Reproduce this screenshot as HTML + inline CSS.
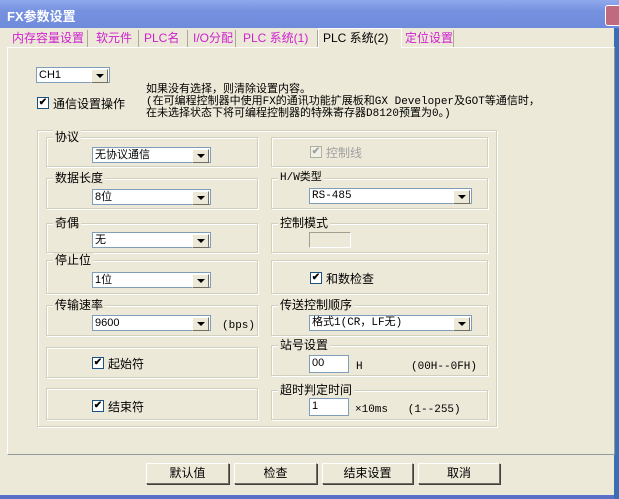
<!DOCTYPE html>
<html><head><meta charset="utf-8"><style>
*{margin:0;padding:0;box-sizing:border-box}
body{width:619px;height:499px;overflow:hidden;background:#ece9d8;position:relative;font-family:"Liberation Sans","WenQuanYi Zen Hei","Noto Sans CJK SC",sans-serif;font-size:12px;color:#000}
.a{position:absolute}
.title{left:0;top:0;width:619px;height:28px;background:linear-gradient(#8fa9ec,#7591df 40%,#6f8bdb);color:#fff;font-weight:bold;font-size:13px;padding:6px 0 0 7px}
.x{left:605px;top:5px;width:14px;height:21px;background:#c06a80;border:1px solid #fff;border-right:none;border-radius:3px 0 0 3px}
.tab{top:30px;height:17px;color:#d020d0;font-size:12px;line-height:16px;padding-left:3px;border-right:1px solid #aca899}
.page{left:7px;top:47px;width:608px;height:408px;border:1px solid #fff;border-right:1px solid #919b9c;border-bottom:1px solid #919b9c}
.grp{border:1px solid #d0d0bf;box-shadow:inset 1px 1px 0 #fff,1px 1px 0 #fff}
.lg{background:#ece9d8;padding:0 2px;top:-8px;left:6px;position:absolute;line-height:14px;white-space:nowrap}
.cb{background:#fff;border:1px solid #7f9db9;height:16px;line-height:14px;padding-left:2px;font-size:11px}
.cb:after{content:"";position:absolute;right:1px;top:1px;width:15px;height:12px;background:#ece9d8;border:1px solid;border-color:#fff #716f64 #716f64 #fff}
.cb i{position:absolute;right:5px;top:6px;border-left:4px solid transparent;border-right:4px solid transparent;border-top:4px solid #000;z-index:2;width:0;height:0}
.chk{width:12px;height:12px;border:1px solid #1c5180;background:#fff;font-size:10px;line-height:10px;text-align:center;font-weight:bold}
.ed{background:#fff;border:1px solid #7f9db9;font-size:11px;padding-left:2px;line-height:14px}
.btn{top:463px;height:21px;border:1px solid;border-color:#fff #716f64 #716f64 #fff;box-shadow:1px 1px 0 #404040;text-align:center;line-height:19px;font-size:12px}
.m{font-family:"Liberation Mono","WenQuanYi Zen Hei",monospace;font-size:11px}
</style></head><body>
<div class="a title">FX参数设置</div>
<div class="a x"></div>
<div class="a" style="left:614px;top:28px;width:5px;height:471px;background:#3a6fb5"></div>
<div class="a" style="left:0;top:495px;width:614px;height:4px;background:#5a6fc8"></div>
<div class="a tab" style="left:9px;width:79px">内存容量设置</div>
<div class="a tab" style="left:93px;width:46px">软元件</div>
<div class="a tab" style="left:141px;width:47px">PLC名</div>
<div class="a tab" style="left:190px;width:46px">I/O分配</div>
<div class="a tab" style="left:240px;width:78px">PLC 系统(1)</div>
<div class="a" style="left:318px;top:28px;width:84px;height:20px;background:#ece9d8;border:1px solid #fff;border-bottom:none;line-height:18px;padding-left:4px;z-index:3">PLC 系统(2)</div>
<div class="a tab" style="left:402px;width:52px">定位设置</div>
<div class="a page"></div>

<div class="a cb" style="left:36px;top:67px;width:74px">CH1<i></i></div>
<div class="a chk" style="left:37px;top:97px">✔</div>
<div class="a" style="left:53px;top:95px">通信设置操作</div>
<div class="a m" style="left:146px;top:84px;line-height:12px;font-size:11px">如果没有选择，则清除设置内容。<br>(在可编程控制器中使用FX的通讯功能扩展板和GX Developer及GOT等通信时，<br>在未选择状态下将可编程控制器的特殊寄存器D8120预置为0。)</div>

<div class="a grp" style="left:37px;top:130px;width:460px;height:297px"></div>

<div class="a grp" style="left:46px;top:137px;width:212px;height:30px"><span class="lg">协议</span></div>
<div class="a cb" style="left:92px;top:147px;width:119px">无协议通信<i></i></div>
<div class="a grp" style="left:46px;top:178px;width:212px;height:31px"><span class="lg">数据长度</span></div>
<div class="a cb" style="left:92px;top:189px;width:119px">8位<i></i></div>
<div class="a grp" style="left:46px;top:223px;width:212px;height:30px"><span class="lg">奇偶</span></div>
<div class="a cb" style="left:92px;top:232px;width:119px">无<i></i></div>
<div class="a grp" style="left:46px;top:260px;width:212px;height:34px"><span class="lg">停止位</span></div>
<div class="a cb" style="left:92px;top:272px;width:119px">1位<i></i></div>
<div class="a grp" style="left:46px;top:305px;width:212px;height:31px"><span class="lg">传输速率</span></div>
<div class="a cb" style="left:92px;top:315px;width:119px">9600<i></i></div>
<div class="a m" style="left:222px;top:320px">(bps)</div>
<div class="a grp" style="left:46px;top:347px;width:212px;height:31px"></div>
<div class="a chk" style="left:92px;top:357px">✔</div>
<div class="a" style="left:108px;top:355px">起始符</div>
<div class="a grp" style="left:46px;top:388px;width:212px;height:32px"></div>
<div class="a chk" style="left:92px;top:400px">✔</div>
<div class="a" style="left:108px;top:398px">结束符</div>

<div class="a grp" style="left:271px;top:137px;width:217px;height:30px"></div>
<div class="a chk" style="left:310px;top:146px;border-color:#b0b0a0;color:#a0a0a0;background:#f0efe8">✔</div>
<div class="a" style="left:326px;top:144px;color:#a0a0a0">控制线</div>
<div class="a grp" style="left:271px;top:178px;width:217px;height:31px"><span class="lg m">H/W类型</span></div>
<div class="a cb m" style="left:309px;top:188px;width:163px">RS-485<i></i></div>
<div class="a grp" style="left:271px;top:223px;width:217px;height:30px"><span class="lg">控制模式</span></div>
<div class="a" style="left:309px;top:232px;width:42px;height:16px;border:1px solid;border-color:#a0a090 #fff #fff #a0a090"></div>
<div class="a grp" style="left:271px;top:260px;width:217px;height:34px"></div>
<div class="a chk" style="left:310px;top:272px">✔</div>
<div class="a" style="left:326px;top:270px">和数检查</div>
<div class="a grp" style="left:271px;top:305px;width:217px;height:31px"><span class="lg">传送控制顺序</span></div>
<div class="a cb m" style="left:309px;top:315px;width:163px">格式1(CR，LF无)<i></i></div>
<div class="a grp" style="left:271px;top:345px;width:217px;height:31px"><span class="lg">站号设置</span></div>
<div class="a ed" style="left:309px;top:355px;width:40px;height:18px">00</div>
<div class="a m" style="left:356px;top:361px">H</div>
<div class="a m" style="left:411px;top:361px">(00H--0FH)</div>
<div class="a grp" style="left:271px;top:390px;width:217px;height:30px"><span class="lg">超时判定时间</span></div>
<div class="a ed" style="left:309px;top:398px;width:40px;height:18px">1</div>
<div class="a m" style="left:355px;top:404px">×10ms&nbsp;&nbsp;&nbsp;(1--255)</div>

<div class="a btn" style="left:146px;width:83px">默认值</div>
<div class="a btn" style="left:234px;width:83px">检查</div>
<div class="a btn" style="left:322px;width:91px">结束设置</div>
<div class="a btn" style="left:418px;width:82px">取消</div>
</body></html>
